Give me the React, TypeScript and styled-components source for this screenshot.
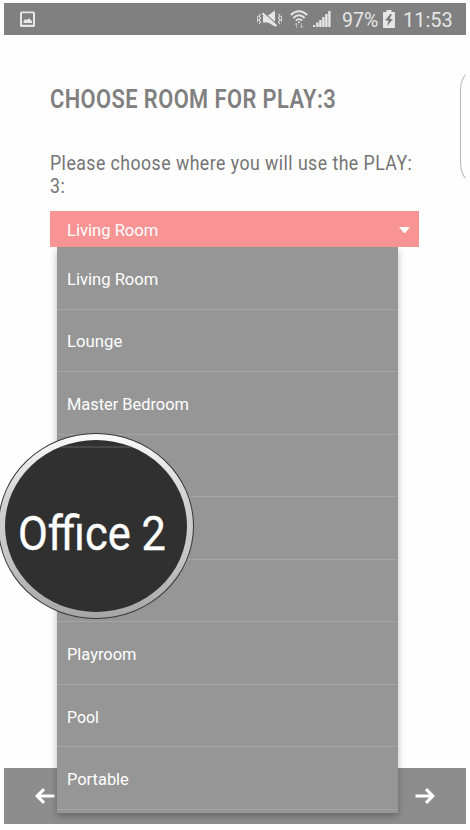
import React from "react";
import styled, { createGlobalStyle } from "styled-components";

const GlobalStyle = createGlobalStyle`
  * { box-sizing: border-box; }
  body { margin: 0; background: #fff; font-family: Roboto, "Liberation Sans", sans-serif; }
  h1, p, ul { margin: 0; padding: 0; }
`;

const Screen = styled.main`
  position: relative;
  width: 470px;
  height: 830px;
  padding: 3px 4px 6px;
  overflow: hidden;
  display: flex;
  flex-direction: column;
  background: #fefefe;
`;

const StatusBar = styled.header`
  height: 32px;
  flex: none;
  display: flex;
  align-items: center;
  padding: 0 14px 0 16px;
  background: #808080;
  color: #e6e6e6;
`;

const Spacer = styled.div`
  flex: 1;
`;

const StatusIcon = styled.svg<{ $gap: number }>`
  display: block;
  flex: none;
  margin-right: ${(p) => p.$gap}px;
`;

const StatusText = styled.span<{ $width: number }>`
  width: ${(p) => p.$width}px;
  font-size: 21px;
  line-height: 32px;
  padding-top: 2px;
  white-space: nowrap;
`;

const Content = styled.section`
  height: 733px;
  flex: none;
  padding: 49px 46px 0 47px;
`;

const Condensed = styled.span<{ $scale: number }>`
  display: block;
  width: max-content;
  transform: scaleX(${(p) => p.$scale});
  transform-origin: left center;
  white-space: nowrap;
`;

const Title = styled.h1`
  margin-left: -1px;
  font-size: 26px;
  line-height: 30px;
  font-weight: 600;
  letter-spacing: 0.5px;
  color: #808080;
`;

const Prompt = styled.p`
  margin-left: -1px;
  margin-top: 38px;
  font-size: 19.5px;
  line-height: 23px;
  letter-spacing: 0.5px;
  color: #747474;
`;

const Select = styled.div`
  margin-left: -1px;
  margin-top: 13px;
  width: 369px;
  height: 36px;
  display: flex;
  align-items: center;
  justify-content: space-between;
  padding: 1px 9px 0 17px;
  background: #f89494;
  color: #fff;
  font-size: 17.3px;
`;

const Menu = styled.ul`
  position: relative;
  z-index: 1;
  margin-left: 6px;
  width: 341px;
  height: 566px;
  list-style: none;
  background: #969696;
  box-shadow: 0 3px 7px rgba(0, 0, 0, 0.28);
  clip-path: inset(0 -12px -12px -12px);
`;

const Option = styled.li`
  height: 62.56px;
  display: flex;
  align-items: center;
  padding: 2px 0 0 10px;
  border-bottom: 1px solid #a5a5a5;
  color: #fff;
  font-size: 17.3px;
`;

const NavBar = styled.nav`
  height: 56px;
  flex: none;
  display: flex;
  align-items: center;
  justify-content: space-between;
  padding: 0 31px;
  background: #8d8d8e;
`;

const EdgePanel = styled.div`
  position: absolute;
  left: 460px;
  top: 73px;
  width: 6px;
  height: 105px;
  overflow: hidden;

  &::before {
    content: "";
    display: block;
    width: 30px;
    height: 105px;
    border: 1px solid #b4b4b4;
    border-radius: 9px / 17px;
  }
`;

const Magnifier = styled.div`
  position: absolute;
  z-index: 2;
  left: -2px;
  top: 433px;
  width: 196px;
  height: 186px;
  padding: 6px;
  border: 1px solid #383838;
  border-radius: 50%;
  background: linear-gradient(#fbfbfb, #d2d2d2 35%, #c6c6c6 65%, #a6a6a6);
`;

const Lens = styled.div`
  width: 100%;
  height: 100%;
  overflow: hidden;
  border-radius: 50%;
  background: linear-gradient(#303030 6px, #484848 6px, #484848 8px, #303030 8px);
  color: #fff;
  font-size: 48.5px;
  -webkit-text-stroke: 0.4px #fff;
  line-height: 56px;
  padding: 66px 0 0 13px;
`;

const options = [
  { name: "Living Room", scale: 0.96 },
  { name: "Lounge", scale: 0.97 },
  { name: "Master Bedroom", scale: 0.948 },
  { name: "", scale: 1 },
  { name: "", scale: 1 },
  { name: "", scale: 1 },
  { name: "Playroom", scale: 0.95 },
  { name: "Pool", scale: 0.92 },
  { name: "Portable", scale: 0.95 },
];

const Arrow = ({ back = false }: { back?: boolean }) => (
  <svg width="20" height="16" viewBox="0 0 20 16" fill="none" stroke="#fff" strokeWidth="3.1">
    {back ? <path d="M19.5 8H2M9 1.2L2.200 8l6.800 6.800" /> : <path d="M.5 8H18M11 1.200L17.800 8l-6.800 6.800" />}
  </svg>
);

export default function App() {
  return (
    <Screen>
      <GlobalStyle />
      <StatusBar>
        <StatusIcon $gap={0} width="16" height="17" viewBox="0 0 16 17">
          <path fillRule="evenodd" fill="#e6e6e6" d="M1.5.5h12Q15 .5 15 2v12.5q0 1.5-1.5 1.5h-12Q0 16 0 14.500V2Q0 .5 1.500.5zM2 2.200v11.500h11V2.200z" />
          <path fill="#e6e6e6" d="M3.500 12v-2l2-2 1.500 1 2-2 1.500 2 1.500.7V12z" />
        </StatusIcon>
        <Spacer />
        <StatusIcon $gap={8} width="25" height="18" viewBox="0 0 25 18">
          <path fill="#e6e6e6" d="M6 5.500h5L18 .5v16L11 12.500H6z" />
          <path d="M6 2l14 12.500" stroke="#808080" strokeWidth="1.500" />
          <path d="M5.500 3.300l14 12.700" stroke="#e6e6e6" strokeWidth="2" />
          <path d="M3.500 4L2 6l1.500 2L2 10l1.500 2L2 14M1 6L0 8l1 2-1 2M21.500 4L23 6l-1.500 2 1.500 2-1.500 2 1.500 2M24 6l1 2-1 2 1 2" fill="none" stroke="#e0e0e0" strokeWidth="1.100" />
        </StatusIcon>
        <StatusIcon $gap={5} width="18" height="19" viewBox="0 0 18 19" fill="none" stroke="#e6e6e6" strokeWidth="1.900">
          <path d="M.8 5Q9-2.500 17.200 5M3.300 8Q9 2.500 14.700 8M5.800 10.700Q9 7.500 12.200 10.700" />
          <circle cx="9" cy="12.200" r="1" fill="#e6e6e6" stroke="none" />
          <path d="M6.500 18v-5M4.800 15l1.700-2 1.700 2M11.500 13v5M9.800 16l1.700 2 1.700-2" strokeWidth="1" stroke="#b5b5b5" />
        </StatusIcon>
        <StatusIcon $gap={11} width="18" height="18" viewBox="0 0 18 18" fill="#e6e6e6">
          <path d="M0 15h2.200v2H0zM3.200 12.500h2.400V17H3.200zM6.200 10h2.400v7H6.200zM9.200 7h2.400v10H9.200zM12.200 4h2.400v13h-2.400zM15.200 1h2.400v16h-2.400z" />
        </StatusIcon>
        <StatusText $width={41}><Condensed $scale={0.93}>97%</Condensed></StatusText>
        <StatusIcon $gap={8} width="12" height="18" viewBox="0 0 12 18">
          <path fill="#e6e6e6" d="M3.500 0h5v2H11q1 0 1 1v14q0 1-1 1H1q-1 0-1-1V3q0-1 1-1h2.500z" />
          <path fill="#777" d="M7.500 4L2 10.500h3.500L4 16l6-7H6.500L9 4z" />
        </StatusIcon>
        <StatusText $width={49}><Condensed $scale={0.95}>11:53</Condensed></StatusText>
      </StatusBar>
      <Content>
        <Title><Condensed $scale={0.84}>CHOOSE ROOM FOR PLAY:3</Condensed></Title>
        <Prompt>
          <Condensed $scale={0.908}>Please choose where you will use the PLAY:</Condensed>
          <Condensed $scale={0.908}>3:</Condensed>
        </Prompt>
        <Select>
          <Condensed $scale={0.96}>Living Room</Condensed>
          <svg width="11" height="6" viewBox="0 0 11 6"><path d="M0 0h11L6.500 5.400q-1 1-2 0z" fill="#fff" /></svg>
        </Select>
        <Menu>
          {options.map((o, i) => (
            <Option key={i}><Condensed $scale={o.scale}>{o.name}</Condensed></Option>
          ))}
        </Menu>
      </Content>
      <NavBar><Arrow back /><Arrow /></NavBar>
      <EdgePanel />
      <Magnifier>
        <Lens><Condensed $scale={0.895}>Office 2</Condensed></Lens>
      </Magnifier>
    </Screen>
  );
}
